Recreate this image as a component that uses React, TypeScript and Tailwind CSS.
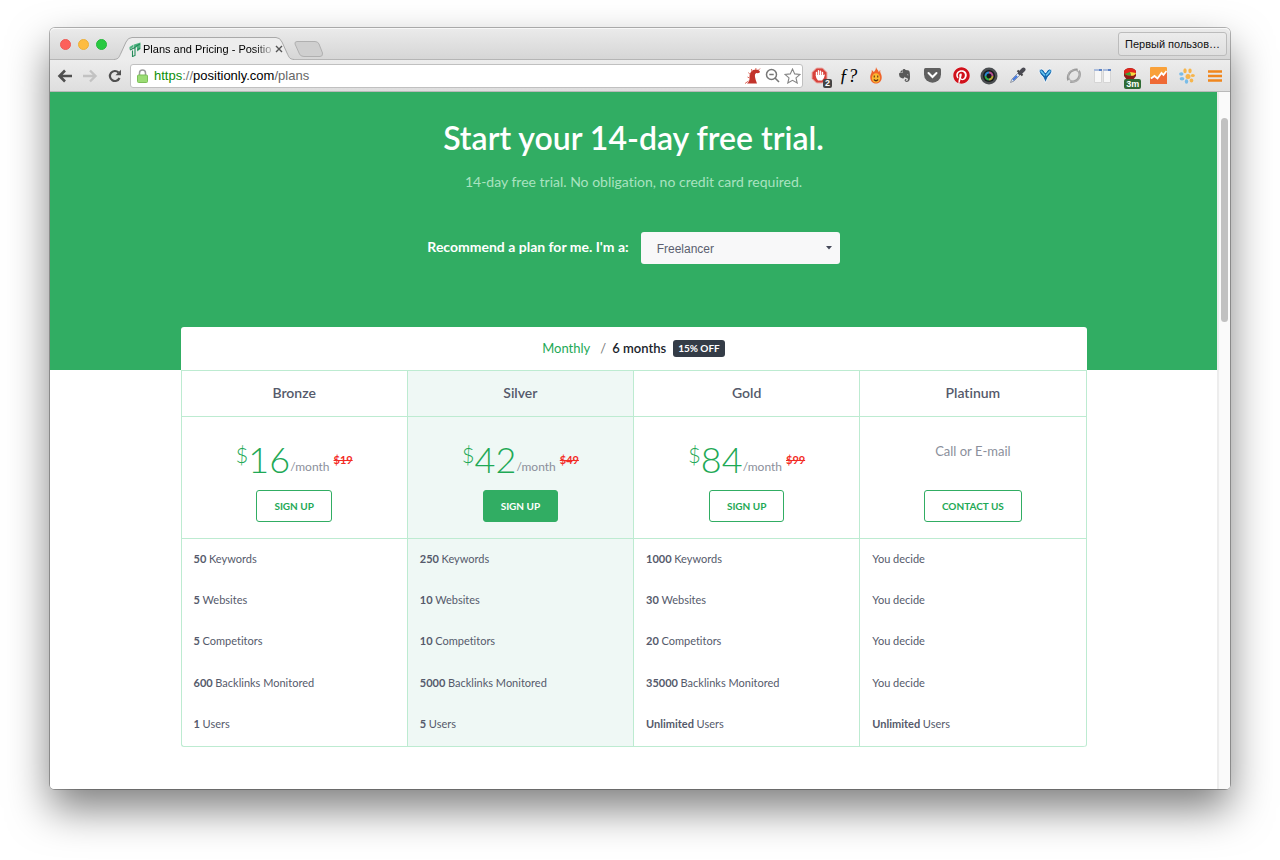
import React from "react";
import { FaPinterest } from "react-icons/fa";
import { SiEvernote } from "react-icons/si";

const plans = [
  { name: "Bronze", price: "16", old: "$19", feats: [["50", "Keywords"], ["5", "Websites"], ["5", "Competitors"], ["600", "Backlinks Monitored"], ["1", "Users"]] },
  { name: "Silver", price: "42", old: "$49", featured: true, feats: [["250", "Keywords"], ["10", "Websites"], ["10", "Competitors"], ["5000", "Backlinks Monitored"], ["5", "Users"]] },
  { name: "Gold", price: "84", old: "$99", feats: [["1000", "Keywords"], ["30", "Websites"], ["20", "Competitors"], ["35000", "Backlinks Monitored"], ["Unlimited", "Users"]] },
  { name: "Platinum", price: "", old: "", feats: [["", "You decide"], ["", "You decide"], ["", "You decide"], ["", "You decide"], ["Unlimited", "Users"]] },
];

function IconButton({ label, children }: { label: string; children: React.ReactNode }) {
  return (
    <button type="button" aria-label={label} className="relative flex size-5 shrink-0 items-center justify-center">
      {children}
    </button>
  );
}

function TabStrip() {
  return (
    <div className="flex h-8 items-end rounded-t-[5px] border-b border-[#b5b5b5] bg-linear-to-b from-[#ebebeb] to-[#d6d6d6] shadow-[inset_0_1px_0_#f8f8f8]">
      <div className="flex h-8 w-[64px] shrink-0 items-center gap-[7px] pl-[10px] pt-[3px]">
        <button type="button" aria-label="Close window" className="size-[11px] rounded-full border border-[#ee5a54] bg-[#fc605b]" />
        <button type="button" aria-label="Minimize window" className="size-[11px] rounded-full border border-[#ecb03a] bg-[#fdbc40]" />
        <button type="button" aria-label="Zoom window" className="size-[11px] rounded-full border border-[#27b83d] bg-[#28c940]" />
      </div>
      <div className="relative -mb-px h-[23px] w-[180px] shrink-0">
        <svg className="absolute inset-0" width="180" height="23" viewBox="0 0 180 23" aria-hidden="true">
          <path d="M0 22.5C5 22 5 20 7 16L12 5Q14 .5 18 .5H162Q166 .5 168 5L173 16C175 20 175 22 180 22.5V23H0Z" fill="#ededed" />
          <path d="M0 22.5C5 22 5 20 7 16L12 5Q14 .5 18 .5H162Q166 .5 168 5L173 16C175 20 175 22 180 22.5" fill="none" stroke="#a9a9a9" />
        </svg>
        <div className="relative flex h-full items-center pl-[15px] pt-px">
          <svg width="12" height="15" viewBox="0 0 12 15" className="shrink-0" aria-hidden="true">
            <path d="M.5 5L4.500 2.500V5L.5 7.500ZM5 2.500L11.500 .5V7L8 9.500V5L5 6.500Z" fill="#4fb381" />
            <path d="M1 8L6 5.500V13.500L3.500 14.500V8.500M6.500 4.500L11 2M8.500 8L11 6" fill="none" stroke="#248c59" strokeWidth="1.100" />
          </svg>
          <span className="ml-[2px] w-[131px] whitespace-nowrap bg-linear-to-r from-black from-82% to-[#d8d8d8] bg-clip-text text-[11px] text-transparent">
            Plans and Pricing - Positio
          </span>
          <button type="button" aria-label="Close tab" className="flex size-[10px] items-center justify-center">
            <svg width="8" height="8" viewBox="0 0 8 8"><path d="M1 1l6 6M7 1L1 7" stroke="#555" strokeWidth="1.400" /></svg>
          </button>
        </div>
      </div>
      <button type="button" aria-label="New tab" className="mb-[2px] shrink-0">
        <svg width="30" height="16" viewBox="0 0 30 16">
          <path d="M3 .5H21Q24 .5 25 3L28.500 12Q29 15.500 26 15.500H10Q6.500 15.500 5.500 13L1 3Q.5 .5 3 .5Z" fill="#cfcfcf" stroke="#b0b0b0" />
        </svg>
      </button>
      <button type="button" className="mb-[3px] ml-auto mr-[3px] h-[24px] shrink-0 rounded-[3px] border border-[#bcbcbc] bg-linear-to-b from-[#ececec] to-[#dfdfdf] px-[6px] pt-px text-[11px] text-[#111]">
        Первый пользов…
      </button>
    </div>
  );
}

function Toolbar() {
  return (
    <div className="flex h-8 items-center border-b border-[#b9b9b9] bg-linear-to-b from-[#ededed] to-[#dedede] pl-[5px]">
      <div className="flex gap-[5px]">
        <IconButton label="Back">
          <svg width="16" height="14" viewBox="0 0 16 14"><path d="M15 7H3M8 1.500L2.500 7L8 12.500" fill="none" stroke="#505050" strokeWidth="2.600" /></svg>
        </IconButton>
        <IconButton label="Forward">
          <svg width="16" height="14" viewBox="0 0 16 14"><path d="M1 7H13M8 1.500L13.500 7L8 12.500" fill="none" stroke="#c2c2c2" strokeWidth="2.400" /></svg>
        </IconButton>
        <IconButton label="Reload">
          <svg width="14" height="14" viewBox="0 0 14 14"><path d="M11.500 9A5 5 0 1 1 10.500 3.500" fill="none" stroke="#505050" strokeWidth="2.200" /><path d="M13 .8V6.300H7.500Z" fill="#505050" /></svg>
        </IconButton>
      </div>
      <div className="ml-[5px] flex h-6 min-w-0 flex-1 items-center rounded-[3px] border border-[#c0c0c0] bg-white pl-[6px]">
        <svg width="11" height="14" viewBox="0 0 11 14" className="shrink-0" aria-hidden="true">
          <path d="M2.500 7V4Q2.500 1 5.500 1T8.500 4V7" fill="none" stroke="#9b9b9b" strokeWidth="1.500" />
          <rect x=".5" y="6" width="10" height="7.500" rx="1" fill="#9bdc74" stroke="#7cbf58" />
        </svg>
        <a href="#plans" className="ml-[6px] flex-1 truncate text-[13px] text-black">
          <span className="text-[#0a8f08]">https</span><span className="text-[#777]">://</span>positionly.com<span className="text-[#666]">/plans</span>
        </a>
        <IconButton label="Site extension">
          <svg width="17" height="16" viewBox="0 0 17 16"><path d="M3 15.500Q6 13 5.500 9C5.500 4.500 8 1.500 12 1.500Q15.500 1.500 16 4Q15.500 5.500 12.500 5Q10.500 5.500 11 9Q11.500 12 13 15.500Z" fill="#c2332b" /><path d="M5.500 10L3.500 9M6 6.500L4.500 4.500M8 3.500L7.500 1M11.500 2L12 0M4.500 13L1 15.500M14.500 2L16 .5" stroke="#dd6a5d" /></svg>
        </IconButton>
        <IconButton label="Zoom out">
          <svg width="15" height="15" viewBox="0 0 15 15"><circle cx="6.500" cy="6.500" r="5" fill="none" stroke="#777" strokeWidth="1.500" /><path d="M4.300 6.500H8.700M10 10L14 14" stroke="#777" strokeWidth="1.600" /></svg>
        </IconButton>
        <IconButton label="Bookmark">
          <svg width="17" height="16" viewBox="0 0 17 16"><path d="M8.500 1L10.700 5.900L16 6.400L12 9.900L13.200 15L8.500 12.300L3.800 15L5 9.900L1 6.400L6.300 5.900Z" fill="none" stroke="#858585" strokeWidth="1.100" /></svg>
        </IconButton>
      </div>
      <div className="ml-[7px] mr-[5px] flex w-[415px] shrink-0 justify-between">
        <IconButton label="Blocker">
          <svg width="18" height="18" viewBox="0 0 18 18"><path d="M5.500 1H11.500L16 5.500V11.500L11.500 16H5.500L1 11.500V5.500Z" fill="#d8423b" stroke="#e9b0ac" /><path d="M5.500 9V5.500M7.500 8V3.700M9.500 8V4.200M11.500 9V5.500" stroke="#fff" strokeWidth="1.400" strokeLinecap="round" /><path d="M4.800 8H12.200L14 7.500Q13.500 11 11 13.500H7Q4.800 12 4.800 8Z" fill="#fff" /></svg>
          <span className="absolute -bottom-[2px] -right-[2px] rounded-[2px] bg-[#444] px-[2px] text-[9px] font-bold leading-[9px] text-white">2</span>
        </IconButton>
        <IconButton label="Font finder"><span className="font-['Liberation_Serif',serif] text-[18px] italic leading-5 text-black">ƒ?</span></IconButton>
        <IconButton label="Flame">
          <svg width="14" height="17" viewBox="0 0 16 17" preserveAspectRatio="none"><path d="M8 0C9 3 11 3 11 5C12 5 12 3 13 3C12 6 15 7 14.500 11C14 15 11 16.500 8 16.500S2 15 1.500 11C1 7 4 6 3 3C5 4 5 5 5.500 5C7 4 8 2 8 0Z" fill="#f0642a" /><circle cx="8" cy="11" r="4.700" fill="#fbb931" /><path d="M6 8.500V10.500M10 8.500V10.500M5.500 12.500Q8 15 10.500 12.500" fill="none" stroke="#5a2d12" strokeWidth="1.200" /></svg>
        </IconButton>
        <IconButton label="Notes"><SiEvernote size={13} color="#5a5a5a" /></IconButton>
        <IconButton label="Save for later">
          <svg width="17" height="15" viewBox="0 0 17 15"><path d="M1.500 0H15.500Q17 0 17 1.500V6.500A8.500 8.300 0 0 1 0 6.500V1.500Q0 0 1.500 0Z" fill="#606060" /><path d="M4.500 5L8.500 9L12.500 5" fill="none" stroke="#fff" strokeWidth="2" strokeLinecap="round" /></svg>
        </IconButton>
        <IconButton label="Pin"><span className="rounded-full bg-white"><FaPinterest size={17} color="#d0111b" /></span></IconButton>
        <IconButton label="Camera">
          <svg width="18" height="18" viewBox="0 0 18 18"><circle cx="9" cy="9" r="8.500" fill="#4a4d50" /><circle cx="9" cy="9" r="6" fill="#17191b" /><path d="M9 5.500A3.500 3.500 0 0 1 12.500 9" fill="none" stroke="#b6508f" strokeWidth="2" /><path d="M12.500 9A3.500 3.500 0 0 1 9 12.500" fill="none" stroke="#b7a839" strokeWidth="2" /><path d="M9 12.500A3.500 3.500 0 0 1 5.500 9" fill="none" stroke="#2fa94d" strokeWidth="2" /><path d="M5.500 9A3.500 3.500 0 0 1 9 5.500" fill="none" stroke="#2887cf" strokeWidth="2" /></svg>
        </IconButton>
        <IconButton label="Colour picker">
          <svg width="17" height="17" viewBox="0 0 17 17"><path d="M1.500 15.500L3 12L10 5L12 7L5 14Z" fill="#dce8fa" stroke="#9299a5" /><path d="M4 13L8 9" stroke="#3e75df" strokeWidth="2" /><path d="M8.500 3.500L13.500 8.500" stroke="#444" strokeWidth="2" /><path d="M11 6L14.500 2.500" stroke="#4a4a52" strokeWidth="4" strokeLinecap="round" /></svg>
        </IconButton>
        <IconButton label="Vector">
          <svg width="15" height="15" viewBox="0 0 15 15"><path d="M1 3Q1.500 .5 4 1Q6 2 7.500 5Q9 2 11 1Q13.500 .5 14 3Q13.500 6 10 9L7.500 14.500L5 9Q1.500 6 1 3Z" fill="#1667ad" stroke="#fff" strokeWidth=".8" /><path d="M3 3L6.500 7M12 3L8.500 7" fill="none" stroke="#67c7f2" strokeWidth="1.500" strokeLinecap="round" /></svg>
        </IconButton>
        <IconButton label="Ring">
          <svg width="18" height="18" viewBox="0 0 18 18"><path d="M2.500 14C0 8 5 1 12.500 1.500L13 4C7 3 3 8 4.500 12Z" fill="#969696" /><path d="M14.500 3C18.500 8 14 17 5 16L5.500 13.500C11 14.500 15 9 13 5Z" fill="#a2a2a2" /><circle cx="9" cy="8.800" r="5.800" fill="none" stroke="#b0b0b0" strokeWidth="1.200" /></svg>
        </IconButton>
        <IconButton label="Columns">
          <svg width="17" height="14" viewBox="0 0 17 14"><path d="M.5 .5H7.500V13.500H.5ZM9.500 .5H16.500V13.500H9.500Z" fill="#f7f7f7" stroke="#d5d5d5" /><path d="M0 1H8M9 1H17" stroke="#a9bbdc" strokeWidth="2" /><path d="M5 1H8M14 1H17" stroke="#5b82c4" strokeWidth="2" /></svg>
        </IconButton>
        <IconButton label="Timer">
          <svg width="14" height="15" viewBox="0 0 14 15" className="mb-[2px]"><path d="M1 6V4Q3 1 7 1T13 4V9L10 13H4L1 9Z" fill="#8f1c17" /><ellipse cx="7" cy="5" rx="6" ry="3.800" fill="#e3261d" /><path d="M7 5L13 6Q12 9 8 8.800Z" fill="#f6dc3e" /><path d="M7 5L8 8.800Q4 9 1.500 7Z" fill="#3fa336" /></svg>
          <span className="absolute -bottom-[3px] left-[4px] rounded-[2px] bg-[#2f6b35] px-[2px] text-[9px] font-bold leading-[10px] text-white">3m</span>
        </IconButton>
        <IconButton label="Analytics">
          <svg width="17" height="17" viewBox="0 0 17 17"><rect width="17" height="17" rx="1" fill="#f9a13a" /><path d="M0 12L4 9L7 12L11 6L13 8L17 4V17H0Z" fill="#ef6a35" /><path d="M1 11.500L4.500 9L7.500 11.500L11.500 6L13.500 8L16.500 4" fill="none" stroke="#fff" strokeWidth="1.800" /></svg>
        </IconButton>
        <IconButton label="Paw">
          <svg width="16" height="16" viewBox="0 0 16 16"><g fill="#f6b54c"><circle cx="9" cy="8.500" r="2.500" /><ellipse cx="6" cy="2.800" rx="1.700" ry="2.500" /><ellipse cx="11" cy="2.800" rx="1.700" ry="2.400" /><ellipse cx="13.800" cy="7.500" rx="2" ry="1.600" /><ellipse cx="12.500" cy="12.500" rx="1.800" ry="2" /></g><g fill="#79bce8"><ellipse cx="2.300" cy="6" rx="2.200" ry="1.700" /><ellipse cx="3" cy="10.800" rx="2.300" ry="1.700" /><ellipse cx="7.500" cy="13.500" rx="1.700" ry="2.300" /></g></svg>
        </IconButton>
        <IconButton label="Menu">
          <svg width="14" height="12" viewBox="0 0 14 12"><path d="M0 1.500H14M0 6H14M0 10.500H14" stroke="#f0861d" strokeWidth="2.400" /></svg>
        </IconButton>
      </div>
    </div>
  );
}

function PriceCell({ plan }: { plan: (typeof plans)[number] }) {
  const solid = plan.featured ? "bg-[#31ad63] text-white" : "bg-white text-[#1ea956]";
  return (
    <div className="flex h-full flex-col items-center pt-[22px]">
      <div className="flex h-[51px] items-start whitespace-nowrap">
        {plan.price ? (
          <>
            <span className="text-[22px] font-light leading-8 text-[#1ea956]">$</span>
            <span className="text-[36px] font-light leading-10 text-[#1ea956]">{plan.price}</span>
            <span className="pt-[18px] text-[12px] leading-5 text-[#8b8f9b]">/month</span>
            <s className="ml-1 pt-[11px] text-[11px] font-bold leading-5 text-[#f32b25]">{plan.old}</s>
          </>
        ) : (
          <span className="pt-[2px] text-[13px] leading-5 text-[#8b8f9b]">Call or E-mail</span>
        )}
      </div>
      <button type="button" className={`h-8 rounded-[3px] border border-[#31ad63] px-[17px] text-[10px] font-bold ${solid}`}>
        {plan.price ? "SIGN UP" : "CONTACT US"}
      </button>
    </div>
  );
}

export default function App() {
  return (
    <div className="bg-white px-[50px] pb-[70px] pt-7 font-['Liberation_Sans',sans-serif]">
      <div className="rounded-[5px] shadow-[0_0_0_1px_rgba(0,0,0,0.28),0_20px_42px_rgba(0,0,0,0.5)]">
        <TabStrip />
        <Toolbar />
        <div className="flex overflow-hidden rounded-b-[4px] bg-white">
          <main className="min-w-0 flex-1 pb-[42px] font-[Lato,sans-serif] [font-variant-ligatures:none]">
            <header className="flex flex-col items-center bg-[#31ad63] pt-[26px]">
              <h1 className="text-[32px] font-semibold leading-10 text-white">Start your 14-day free trial.</h1>
              <p className="mt-[14px] text-[14px] leading-5 text-[#a9e3c0]">14-day free trial. No obligation, no credit card required.</p>
              <div className="mt-10 flex items-center gap-3">
                <label htmlFor="role" className="pb-[3px] text-[14px] font-bold text-white">Recommend a plan for me. I'm a:</label>
                <div className="relative">
                  <select id="role" className="h-8 w-[199px] appearance-none rounded-[3px] bg-[#f8f8f9] px-4 pt-px font-['Liberation_Sans',sans-serif] text-[12px] text-[#5b5f70]">
                    <option>Freelancer</option>
                  </select>
                  <svg className="pointer-events-none absolute right-2 top-[14px]" width="6" height="4" viewBox="0 0 6 4" aria-hidden="true"><path d="M0 0H6L3 3.500Z" fill="#454959" /></svg>
                </div>
              </div>
              <div className="mt-[63px] flex h-[43px] w-full max-w-[906px] items-center justify-center rounded-t-[3px] bg-white text-[13px]">
                <button type="button" className="text-[#1ea956]">Monthly</button>
                <span className="ml-[10px] mr-[6px] text-[#777]">/</span>
                <button type="button" className="font-semibold text-[#20242c]">6 months</button>
                <span className="ml-[7px] rounded-[3px] bg-[#343c47] px-[5px] text-[10px] font-bold leading-[17px] text-white">15% OFF</span>
              </div>
            </header>
            <table className="mx-auto h-[377px] w-full max-w-[906px] table-fixed border-separate border-spacing-0 rounded-b-[3px] border-r border-t border-[#bdebd1] text-[#555a6b]">
              <thead>
                <tr className="h-[46px]">
                  {plans.map((p) => (
                    <th key={p.name} scope="col" className={`border-b border-l border-[#bdebd1] p-0 pb-[2px] text-[14px] font-semibold ${p.featured ? "bg-[#eff8f5]" : ""}`}>{p.name}</th>
                  ))}
                </tr>
              </thead>
              <tbody>
                <tr className="h-[122px]">
                  {plans.map((p) => (
                    <td key={p.name} className={`border-b border-l border-[#bdebd1] p-0 align-top ${p.featured ? "bg-[#eff8f5]" : ""}`}><PriceCell plan={p} /></td>
                  ))}
                </tr>
                {[0, 1, 2, 3, 4].map((r) => (
                  <tr key={r}>
                    {plans.map((p) => (
                      <td key={p.name} className={`border-l border-[#bdebd1] py-0 pl-3 pr-0 text-[11px] ${r === 4 ? "border-b first:rounded-bl-[3px] last:rounded-br-[3px]" : ""} ${p.featured ? "bg-[#eff8f5]" : ""}`}>
                        {p.feats[r][0] && <strong className="font-bold">{p.feats[r][0]} </strong>}{p.feats[r][1]}
                      </td>
                    ))}
                  </tr>
                ))}
              </tbody>
            </table>
          </main>
          <div className="w-[13px] shrink-0 border-l-2 border-[#ededed] bg-[#fafafa] pl-[2px] pt-[26px]">
            <div className="h-[204px] w-[7px] rounded-full bg-[#c1c1c1]" />
          </div>
        </div>
      </div>
    </div>
  );
}
